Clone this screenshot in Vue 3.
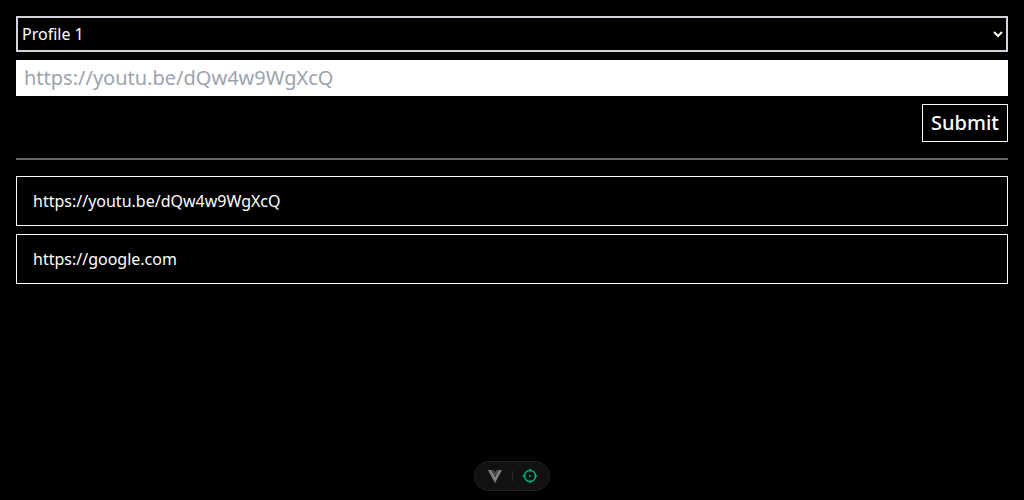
<script setup>
import { ref } from 'vue'

const profiles = ['Profile 1']
const profile = ref(profiles[0])
const url = ref('')
const links = ref(['https://youtu.be/dQw4w9WgXcQ', 'https://google.com'])

function submit() {
  if (url.value) {
    links.value.push(url.value)
    url.value = ''
  }
}
</script>

<template>
  <main class="page">
    <form class="form" @submit.prevent="submit">
      <select v-model="profile" class="profile" aria-label="Profile">
        <option v-for="name in profiles" :key="name">{{ name }}</option>
      </select>
      <input
        v-model="url"
        class="url"
        type="text"
        aria-label="Link"
        placeholder="https://youtu.be/dQw4w9WgXcQ"
      />
      <button class="submit" type="submit">Submit</button>
    </form>
    <hr class="rule" />
    <ul class="links">
      <li v-for="link in links" :key="link">
        <a class="link" :href="link">{{ link }}</a>
      </li>
    </ul>
  </main>
  <div class="devtools">
    <button class="tool" type="button" aria-label="Toggle devtools panel">
      <svg class="logo" viewBox="0 0 256 221" preserveAspectRatio="none" aria-hidden="true">
        <path fill="#808080" d="M0 0 128 220.8 256 0h-56L128 120 56 0H0Z" />
        <path fill="#484848" d="M56 0 128 120 200 0h-44L128 44 100 0H56Z" />
      </svg>
    </button>
    <span class="divider"></span>
    <button class="tool" type="button" aria-label="Toggle component inspector">
      <svg class="target" viewBox="0 0 24 24" aria-hidden="true">
        <g fill="none" stroke="#00b06c" stroke-linecap="round" stroke-width="2">
          <circle cx="12" cy="12" r="7.4" />
          <circle cx="12" cy="12" r="0.5" />
          <path d="M12 3v2M12 19v2M3 12h2M19 12h2" />
        </g>
      </svg>
    </button>
  </div>
</template>

<style>
body {
  background: #000;
}
</style>

<style scoped>
* {
  box-sizing: border-box;
}

.page {
  padding: 16px;
  color: #fff;
  font: 16px/24px "Noto Sans", sans-serif;
}

.form {
  display: flex;
  flex-direction: column;
  gap: 8px;
}

.profile {
  height: 36px;
  padding: 0;
  border: 2px solid #d1d5db;
  border-radius: 0;
  background: #000;
  color: inherit;
  font: inherit;
}

.url {
  width: 100%;
  padding: 4px 8px 5px;
  border: 0;
  border-radius: 0;
  background: #fff;
  color: #000;
  font: inherit;
  font-size: 20px;
  line-height: 27px;
}

.url::placeholder {
  color: #9ca3af;
}

.submit {
  align-self: flex-end;
  padding: 4px 8px;
  border: 1px solid #fff;
  background: #000;
  color: inherit;
  font: inherit;
  font-size: 20px;
  font-weight: 500;
  line-height: 28px;
}

.rule {
  height: 2px;
  margin: 16px 0;
  border: 0;
  background: #666;
}

.links {
  display: flex;
  flex-direction: column;
  gap: 8px;
  margin: 0;
  padding: 0;
  list-style: none;
}

.link {
  display: block;
  padding: 12px 16px;
  border: 1px solid #fff;
  color: inherit;
  text-decoration: none;
}

.devtools {
  position: fixed;
  bottom: 9px;
  left: 50%;
  display: flex;
  align-items: center;
  gap: 7px;
  height: 30px;
  padding: 0 9px 0 10px;
  border: 1px solid #222;
  border-radius: 15px;
  background: #111;
  transform: translateX(-50%);
}

.tool {
  display: flex;
  align-items: center;
  justify-content: center;
  width: 20px;
  height: 20px;
  padding: 0;
  border: 0;
  background: none;
}

.logo {
  width: 14px;
  height: 13px;
}

.target {
  width: 18px;
  height: 18px;
}

.divider {
  width: 1px;
  height: 10px;
  background: #2c2c2c;
}
</style>
